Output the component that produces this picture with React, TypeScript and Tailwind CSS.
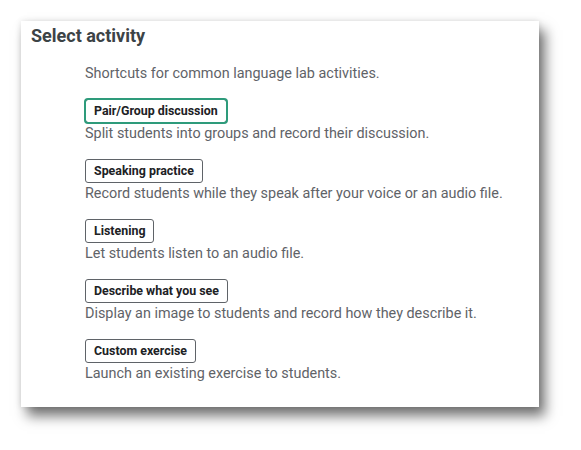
import React from "react";

interface Activity {
  label: string;
  text: string;
}

const activities: Activity[] = [
  { label: "Pair/Group discussion", text: "Split students into groups and record their discussion." },
  { label: "Speaking practice", text: "Record students while they speak after your voice or an audio file." },
  { label: "Listening", text: "Let students listen to an audio file." },
  { label: "Describe what you see", text: "Display an image to students and record how they describe it." },
  { label: "Custom exercise", text: "Launch an existing exercise to students." },
];

// activity picker card
const App: React.FC = () => {
  return (
    <div className="w-[581px] h-[450px] bg-white pt-[21px] pl-[21px] font-['Roboto',sans-serif]">
      <div className="w-[518px] h-[386px] bg-white shadow-[6px_9px_12px_rgba(0,0,0,0.55),0_0_6px_rgba(0,0,0,0.12)] px-[10px] pt-[1px]">
        <h2 className="text-[18px] leading-[28px] font-bold text-[#3c4346]">Select activity</h2>
        <div className="ml-[54px] mt-[14px]">
          <p className="text-[14.4px] leading-[20px] text-[#5f6368]">
            Shortcuts for common language lab activities.
          </p>
          <ul className="mt-[15px] flex flex-col gap-[15px]">
            {activities.map((a, i) => (
              <li key={a.label} className="flex flex-col items-start">
                <button
                  className={
                    i === 0
                      ? "block h-[24px] px-[8px] text-[12.4px] leading-[22px] font-bold text-[#202124] bg-white rounded-[3px] border border-[#5f6368] outline-2 outline-[#2e9b7b] -outline-offset-1"
                      : "block h-[24px] px-[8px] text-[12.4px] leading-[22px] font-bold text-[#202124] bg-white rounded-[3px] border border-[#5f6368]"
                  }
                >
                  {a.label}
                </button>
                <p className="mt-[1px] text-[14.4px] leading-[20px] text-[#5f6368]">{a.text}</p>
              </li>
            ))}
          </ul>
        </div>
      </div>
    </div>
  );
};

export default App;
